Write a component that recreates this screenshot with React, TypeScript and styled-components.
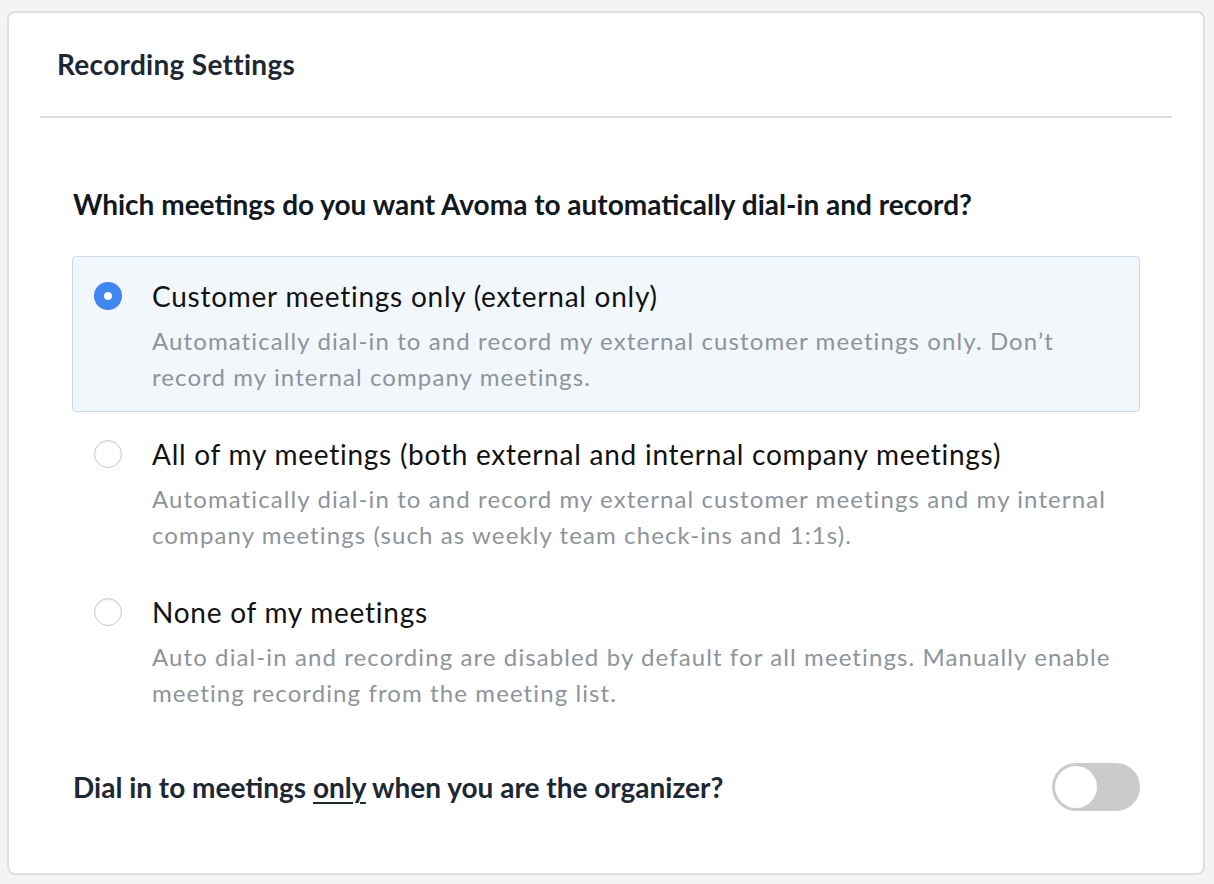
import React, { useState } from "react";
import styled, { createGlobalStyle } from "styled-components";

const Global = createGlobalStyle`
  html, body { margin: 0; padding: 0; background: #f4f4f4; }
  body { font-family: Lato, "Open Sans", sans-serif; -webkit-font-smoothing: antialiased; }
  * { box-sizing: border-box; }
`;

const Page = styled.div`
  padding: 11px 9px 9px 7px;
`;

const Card = styled.section`
  background: #fff;
  border: 2px solid #e0e0e0;
  border-radius: 8px;
  height: 864px;
  display: flex;
  flex-direction: column;
`;

const Header = styled.header`
  height: 103px;
  padding: 0 48px 2px;
  display: flex;
  align-items: center;
`;

const Title = styled.h1`
  margin: 0;
  font-size: 28px;
  line-height: 36px;
  font-weight: 700;
  letter-spacing: 0.3px;
  color: #1d2835;
`;

const Divider = styled.hr`
  margin: 0 31px;
  border: none;
  height: 2px;
  background: #dedede;
`;

const Body = styled.div`
  padding: 0 63px;
  display: flex;
  flex-direction: column;
`;

const Question = styled.h2`
  margin: 68px 0 0 1px;
  font-size: 28px;
  line-height: 36px;
  font-weight: 700;
  color: #111820;
`;

const Options = styled.div`
  margin-top: 34px;
  display: flex;
  flex-direction: column;
  gap: 2px;
`;

const Option = styled.label<{ $selected: boolean }>`
  display: flex;
  align-items: flex-start;
  gap: 30px;
  padding: 21px 24px 16px 21px;
  border: 1.5px solid ${(p) => (p.$selected ? "#c3dcf2" : "transparent")};
  background: ${(p) => (p.$selected ? "#f2f7fc" : "transparent")};
  border-radius: 4px;
  cursor: pointer;
`;

const Radio = styled.span<{ $checked: boolean }>`
  flex: none;
  width: 28px;
  height: 28px;
  margin-top: 4px;
  border-radius: 50%;
  border: ${(p) => (p.$checked ? "none" : "1.5px solid #c9c9c9")};
  background: ${(p) => (p.$checked ? "#3e87f4" : "#fff")};
  box-shadow: ${(p) => (p.$checked ? "none" : "inset 0 1px 2px rgba(0,0,0,0.08)")};
  display: flex;
  align-items: center;
  justify-content: center;
  &::after {
    content: "";
    display: ${(p) => (p.$checked ? "block" : "none")};
    width: 8px;
    height: 8px;
    border-radius: 50%;
    background: #fff;
  }
`;

const OptionText = styled.div`
  display: flex;
  flex-direction: column;
`;

const OptionTitle = styled.div`
  font-size: 28px;
  line-height: 36px;
  color: #121212;
  letter-spacing: 0.75px;
`;

const OptionDesc = styled.div`
  margin-top: 9px;
  font-size: 24px;
  line-height: 36px;
  color: #8d949c;
  letter-spacing: 1.1px;
`;

const ToggleRow = styled.div`
  margin-top: 35px;
  display: flex;
  align-items: center;
  justify-content: space-between;
`;

const ToggleLabel = styled.div`
  margin-left: 1px;
  font-size: 28px;
  line-height: 36px;
  font-weight: 700;
  color: #1d2835;
  u { text-underline-offset: 4px; text-decoration-thickness: 2px; }
`;

const Toggle = styled.button<{ $on: boolean }>`
  width: 88px;
  height: 48px;
  border-radius: 24px;
  border: none;
  padding: 3px;
  background: ${(p) => (p.$on ? "#3e87f4" : "#cbcbcb")};
  display: flex;
  justify-content: ${(p) => (p.$on ? "flex-end" : "flex-start")};
  cursor: pointer;
`;

const Knob = styled.span`
  width: 42px;
  height: 42px;
  border-radius: 50%;
  background: #fff;
`;

const options = [
  {
    title: "Customer meetings only (external only)",
    desc: "Automatically dial-in to and record my external customer meetings only. Don\u2019t record my internal company meetings.",
  },
  {
    title: "All of my meetings (both external and internal company meetings)",
    desc: "Automatically dial-in to and record my external customer meetings and my internal company meetings (such as weekly team check-ins and 1:1s).",
  },
  {
    title: "None of my meetings",
    desc: "Auto dial-in and recording are disabled by default for all meetings. Manually enable meeting recording from the meeting list.",
  },
];

export default function App() {
  const [sel, setSel] = useState(0);
  const [on, setOn] = useState(false);
  return (
    <Page>
      <Global />
      <Card>
        <Header>
          <Title>Recording Settings</Title>
        </Header>
        <Divider />
        <Body>
          <Question>Which meetings do you want Avoma to automatically dial-in and record?</Question>
          <Options>
            {options.map((o, i) => (
              <Option key={i} $selected={sel === i} onClick={() => setSel(i)}>
                <Radio $checked={sel === i} />
                <OptionText>
                  <OptionTitle>{o.title}</OptionTitle>
                  <OptionDesc>{o.desc}</OptionDesc>
                </OptionText>
              </Option>
            ))}
          </Options>
          <ToggleRow>
            <ToggleLabel>
              Dial in to meetings <u>only</u> when you are the organizer?
            </ToggleLabel>
            <Toggle $on={on} onClick={() => setOn(!on)} aria-label="toggle">
              <Knob />
            </Toggle>
          </ToggleRow>
        </Body>
      </Card>
    </Page>
  );
}
